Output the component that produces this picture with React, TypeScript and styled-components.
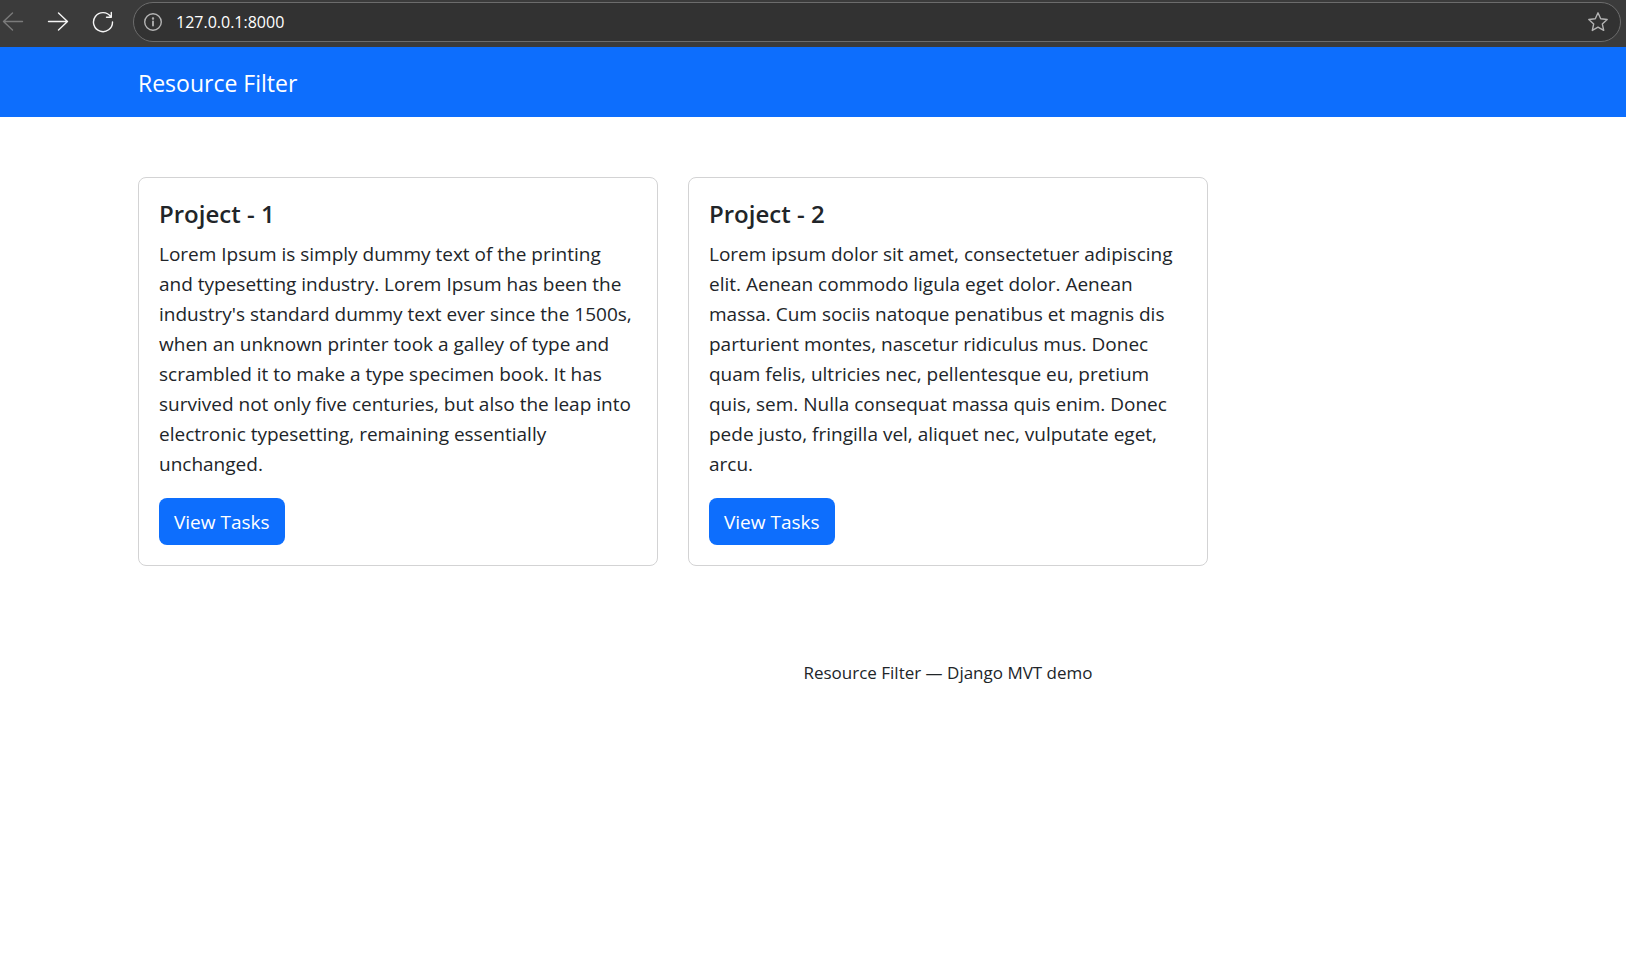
import React from "react";
import styled, { createGlobalStyle } from "styled-components";

const GlobalStyle = createGlobalStyle`
  *, *::before, *::after { box-sizing: border-box; }
  body {
    margin: 0;
    background: #fff;
    color: #212529;
    font-family: "Segoe UI", "Open Sans", "Noto Sans", sans-serif;
    font-size: 19px;
    line-height: 30px;
  }
`;

const Toolbar = styled.div`
  display: flex;
  align-items: center;
  height: 47px;
  padding: 0 5px 3px 0;
  background: #3b3b3b;
`;

const ToolButton = styled.button<{ $dim?: boolean }>`
  display: flex;
  flex: none;
  width: 45px;
  padding: 0 0 0 2px;
  border: 0;
  background: none;
  color: ${(p) => (p.$dim ? "#7b7b7b" : "#f5f5f5")};
`;

const AddressBar = styled.div`
  display: flex;
  flex: 1;
  align-items: center;
  gap: 13px;
  height: 40px;
  min-width: 0;
  margin-left: -2px;
  padding: 0 11px 0 9px;
  border: 1px solid #6c6c6c;
  border-radius: 20px;
  background: #323232;
`;

const BarButton = styled.button`
  display: flex;
  flex: none;
  padding: 0;
  border: 0;
  background: none;
  color: #b4b4b4;
`;

const AddressInput = styled.input`
  flex: 1;
  min-width: 0;
  height: 30px;
  padding: 0;
  border: 0;
  outline: 0;
  background: none;
  color: #fff;
  font: 16px/30px "Segoe UI", "Open Sans", sans-serif;
`;

const Navbar = styled.nav`
  padding: 21px 138px 19px;
  background: #0d6efd;
`;

const Brand = styled.a`
  display: block;
  color: #fff;
  font-size: 23px;
  text-decoration: none;
`;

const Main = styled.main`
  padding: 60px 138px;
`;

const CardGrid = styled.div`
  display: grid;
  grid-template-columns: repeat(2, minmax(0, 1fr));
  gap: 30px;
  max-width: 1070px;
`;

const Card = styled.article`
  padding: 21px 20px 20px;
  border: 1px solid #d3d3d4;
  border-radius: 8px;
`;

const CardTitle = styled.h5`
  margin: 0 0 10px;
  font-size: 24px;
  font-weight: 600;
  line-height: 30px;
`;

const CardText = styled.p`
  margin: 0 0 19px;
`;

const TaskLink = styled.a`
  display: inline-block;
  padding: 9px 15px 8px;
  border-radius: 8px;
  background: #0d6efd;
  color: #fff;
  line-height: 30px;
  text-decoration: none;
  vertical-align: top;
`;

const Footer = styled.footer`
  padding: 32px 0 30px 270px;
  font-size: 17px;
  text-align: center;
`;

const projects = [
  {
    title: "Project - 1",
    text: "Lorem Ipsum is simply dummy text of the printing and typesetting industry. Lorem Ipsum has been the industry's standard dummy text ever since the 1500s, when an unknown printer took a galley of type and scrambled it to make a type specimen book. It has survived not only five centuries, but also the leap into electronic typesetting, remaining essentially unchanged.",
  },
  {
    title: "Project - 2",
    text: "Lorem ipsum dolor sit amet, consectetuer adipiscing elit. Aenean commodo ligula eget dolor. Aenean massa. Cum sociis natoque penatibus et magnis dis parturient montes, nascetur ridiculus mus. Donec quam felis, ultricies nec, pellentesque eu, pretium quis, sem. Nulla consequat massa quis enim. Donec pede justo, fringilla vel, aliquet nec, vulputate eget, arcu.",
  },
];

const Icon = ({ size = 22, children }: { size?: number; children: React.ReactNode }) => (
  <svg
    width={size}
    height={size}
    viewBox={`0 0 ${size} ${size}`}
    fill="none"
    stroke="currentColor"
    strokeWidth="1.4"
    strokeLinecap="round"
    strokeLinejoin="round"
    aria-hidden="true"
  >
    {children}
  </svg>
);

export default function App() {
  return (
    <>
      <GlobalStyle />
      <Toolbar>
        <ToolButton $dim aria-label="Back" disabled>
          <Icon><path d="M20.5 10.5H1.5M10.5 2L1.5 10.5l9 8.5" /></Icon>
        </ToolButton>
        <ToolButton aria-label="Forward">
          <Icon><path d="M1.5 10.5H20.5M11.5 2L20.5 10.5l-9 8.5" /></Icon>
        </ToolButton>
        <ToolButton aria-label="Reload">
          <Icon><path d="M18.8 5.7A9.5 9.5 0 1 0 20.5 11M19.3 1.5V6.2H14.5" /></Icon>
        </ToolButton>
        <AddressBar>
          <BarButton aria-label="Site information">
            <Icon size={20}>
              <circle cx="10" cy="10" r="8.3" />
              <path d="M10 9.5v4" strokeWidth="1.8" />
              <circle cx="10" cy="6.5" r="0.5" />
            </Icon>
          </BarButton>
          <AddressInput aria-label="Address" defaultValue="127.0.0.1:8000" />
          <BarButton aria-label="Add to favorites">
            <Icon><path d="M11 1.8l2.7 6 6.5.7-4.9 4.4 1.4 6.5L11 16.1l-5.7 3.3 1.4-6.5L1.8 8.5l6.5-.7z" /></Icon>
          </BarButton>
        </AddressBar>
      </Toolbar>
      <Navbar>
        <Brand href="#">Resource Filter</Brand>
      </Navbar>
      <Main>
        <CardGrid>
          {projects.map((p) => (
            <Card key={p.title}>
              <CardTitle>{p.title}</CardTitle>
              <CardText>{p.text}</CardText>
              <TaskLink href="#">View Tasks</TaskLink>
            </Card>
          ))}
        </CardGrid>
      </Main>
      <Footer>Resource Filter — Django MVT demo</Footer>
    </>
  );
}
